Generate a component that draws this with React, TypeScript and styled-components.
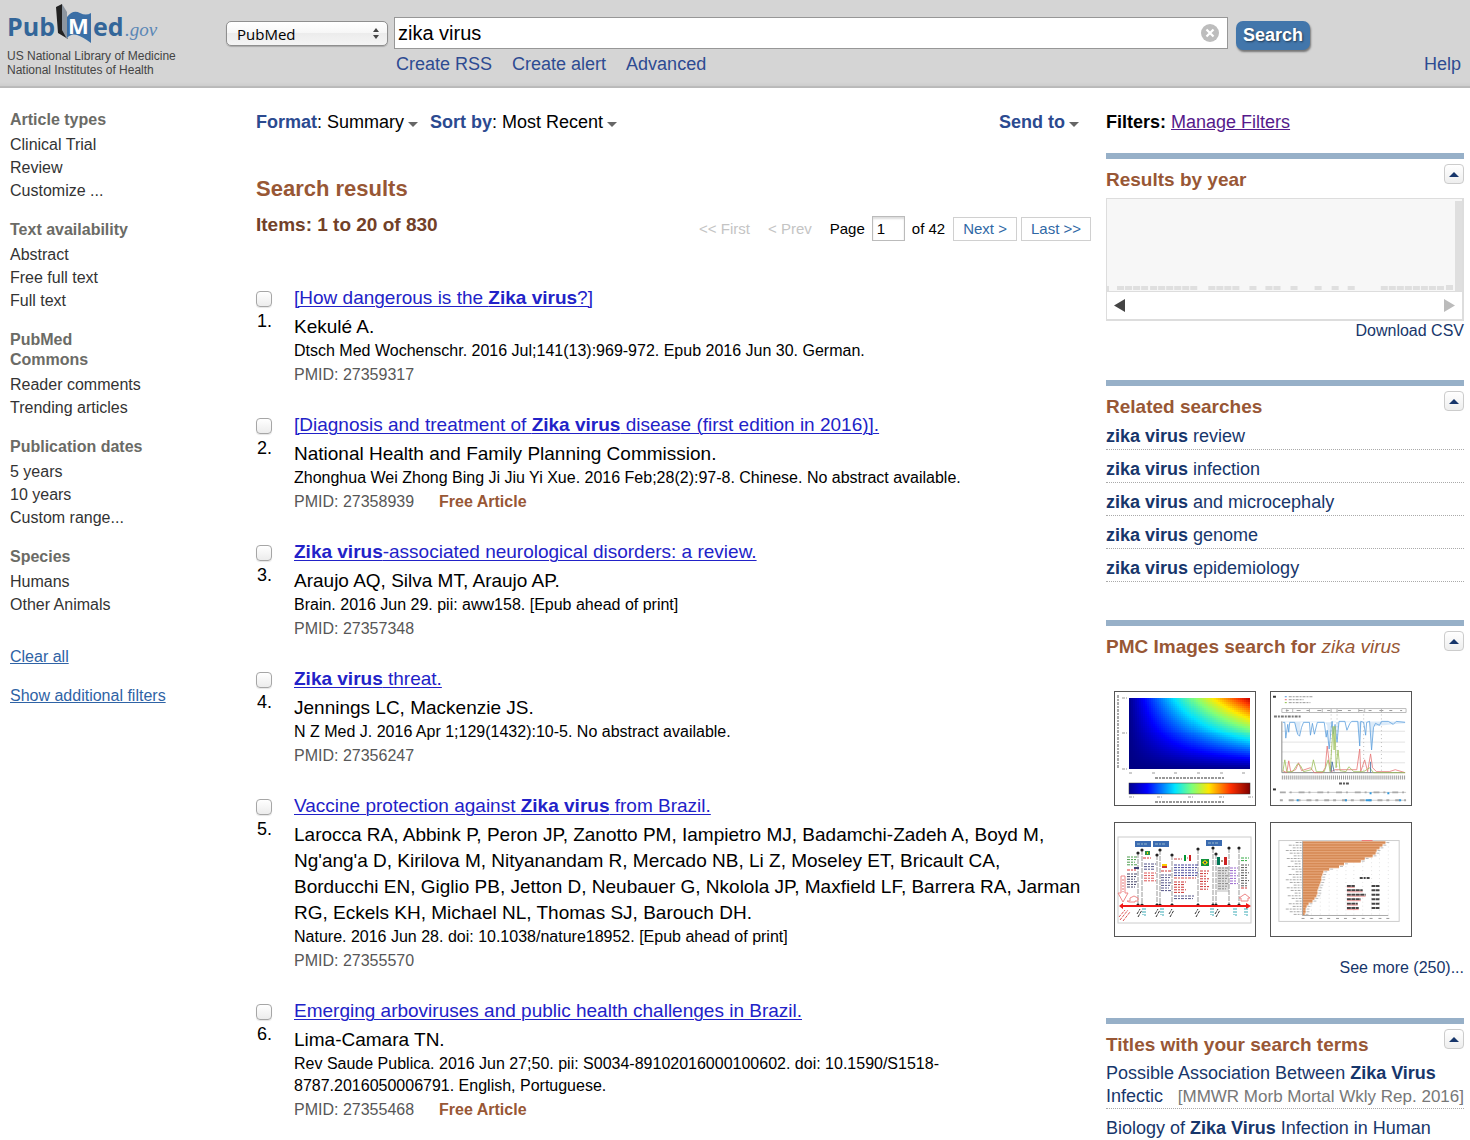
import React from 'react';
import styled, { createGlobalStyle } from 'styled-components';

const GlobalStyle = createGlobalStyle`
  *, *::before, *::after { box-sizing: border-box; }
  body {
    margin: 0;
    background: #fff;
    color: #000;
    font-family: Arial, "Liberation Sans", sans-serif;
    font-size: 16px;
    line-height: 22px;
  }
  h1, h2, h3, p, ul, ol { margin: 0; padding: 0; font-weight: inherit; }
  ul, ol { list-style: none; }
  button, input, select { font-family: inherit; }
`;

/* ---------- header ---------- */

const Header = styled.header`
  display: grid;
  grid-template-columns: 226px minmax(0, 1fr);
  height: 88px;
  background: linear-gradient(#d5d5d5 82px, #cdcdcd 86px, #a9a9a9 87px, #c9c9c9 88px);
`;

const Brand = styled.div`
  padding: 4px 0 0 7px;
`;

const LogoLink = styled.a`
  display: block;
  height: 45px;
`;

const Tagline = styled.p`
  color: #444;
  font-size: 12px;
  line-height: 14px;
`;

const SearchArea = styled.div`
  padding: 17px 9px 0 0;
`;

const SearchForm = styled.form`
  display: grid;
  grid-template-columns: 162px minmax(0, 1fr) 76px 145px;
  align-items: start;
  column-gap: 6px;
`;

const SelectWrap = styled.div`
  position: relative;
  margin-top: 4px;
`;

const DatabaseSelect = styled.select`
  appearance: none;
  display: block;
  width: 100%;
  height: 25px;
  padding: 0 10px;
  border: 1px solid #8f8f8f;
  border-radius: 5px;
  background: linear-gradient(#fff, #f6f6f6 50%, #ececec 50%, #f4f4f4);
  box-shadow: 0 1px 1px rgba(0, 0, 0, 0.2);
  color: #000;
  font-family: "Open Sans", sans-serif;
  font-size: 15px;
`;

const SelectArrows = styled.svg`
  position: absolute;
  top: 7px;
  right: 9px;
  pointer-events: none;
`;

const QueryWrap = styled.div`
  position: relative;
`;

const QueryInput = styled.input`
  display: block;
  width: 100%;
  height: 32px;
  padding: 0 34px 0 3px;
  border: 1px solid #979797;
  border-radius: 0;
  background: #fff;
  font-size: 20px;
`;

const ClearButton = styled.button`
  position: absolute;
  top: 6px;
  right: 8px;
  padding: 0;
  border: 0;
  background: none;
  line-height: 0;
`;

const SearchButton = styled.button`
  height: 29px;
  margin: 4px 0 0 2px;
  padding: 0;
  border: 0;
  border-radius: 7px;
  background: #4276ab;
  box-shadow: 1px 2px 2px rgba(0, 0, 0, 0.45);
  color: #fff;
  font-size: 18px;
  font-weight: bold;
  text-shadow: 1px 1px 2px rgba(0, 0, 0, 0.5);
`;

const HeaderLinks = styled.nav`
  display: flex;
  gap: 20px;
  padding: 3px 0 0 170px;
`;

const HeaderLink = styled.a<{ $end?: boolean }>`
  margin-left: ${(p) => (p.$end ? 'auto' : '0')};
  color: #2d4b92;
  font-size: 18px;
  text-decoration: none;
`;

/* ---------- page columns ---------- */

const Columns = styled.div`
  display: grid;
  grid-template-columns: 231px minmax(0, 1fr) 358px;
  column-gap: 15px;
  padding: 0 6px 0 10px;
`;

const FilterColumn = styled.aside`
  padding-top: 22px;
`;

const FilterGroup = styled.section`
  width: 150px;
  margin-bottom: 18px;
`;

const FilterHeading = styled.h3`
  margin-bottom: 3px;
  color: #6b6b66;
  font-size: 16px;
  font-weight: bold;
  line-height: 20px;
`;

const FilterLink = styled.a`
  display: block;
  color: #333;
  line-height: 23px;
  text-decoration: none;
`;

const FilterAction = styled.a`
  display: table;
  margin: 30px 0 -13px;
  color: #2f63a5;
`;

const Main = styled.main`
  padding-top: 22px;
`;

const Toolbar = styled.div`
  display: flex;
  gap: 12px;
  padding-right: 12px;
`;

const MenuButton = styled.button<{ $end?: boolean }>`
  display: flex;
  align-items: center;
  margin-left: ${(p) => (p.$end ? 'auto' : '0')};
  padding: 0;
  border: 0;
  background: none;
  color: #000;
  font-size: 18px;
  line-height: 24px;
  white-space: pre;
`;

const MenuLabel = styled.b`
  color: #2b4a90;
`;

const Caret = styled.span`
  width: 0;
  margin: 4px 0 0 4px;
  border: 5px solid transparent;
  border-top-color: #666;
  border-bottom: 0;
`;

const ResultsTitle = styled.h1`
  margin-top: 41px;
  color: #985735;
  font-size: 22px;
  font-weight: bold;
  line-height: 28px;
`;

const CountRow = styled.div`
  display: flex;
  align-items: flex-start;
  justify-content: space-between;
  margin-top: 10px;
`;

const Count = styled.h2`
  color: #724128;
  font-size: 19px;
  font-weight: bold;
  line-height: 24px;
`;

const Pager = styled.form`
  display: flex;
  align-items: center;
  gap: 4px;
  margin-top: 3px;
  font-size: 15px;
`;

const PagerOff = styled.span`
  margin-right: 14px;
  color: #c4c4c4;
`;

const PageLabel = styled.label`
  display: flex;
  align-items: center;
  gap: 7px;
`;

const PageInput = styled.input`
  width: 33px;
  height: 25px;
  padding: 0 4px;
  border: 1px solid #bbb;
  box-shadow: inset 0 2px 2px #ddd;
  font-size: 15px;
`;

const PagerButton = styled.a`
  padding: 0 9px;
  border: 1px solid #d0d0d0;
  color: #2f68a5;
  text-decoration: none;
`;

const PageTotal = styled.span`
  margin: 0 4px 0 3px;
`;

const ResultList = styled.ol`
  margin-top: 44px;
`;

const ResultItem = styled.li`
  display: grid;
  grid-template-columns: 38px minmax(0, 1fr);
  margin-bottom: 26px;
  padding-right: 5px;
`;

const Marker = styled.label`
  display: flex;
  flex-direction: column;
  gap: 3px;
  padding-top: 6px;
  font-size: 18px;
`;

const ResultCheck = styled.input`
  appearance: none;
  width: 16px;
  height: 16px;
  margin: 0;
  border: 1px solid #a6a6a6;
  border-radius: 4px;
  background: linear-gradient(#fff, #ececec);
  box-shadow: 0 1px 1px rgba(0, 0, 0, 0.1);
  &:checked { background: #6d9edb; }
`;

const Ordinal = styled.span`
  padding-left: 1px;
`;

const ResultTitle = styled.p`
  margin-bottom: 3px;
  font-size: 19px;
  line-height: 26px;
`;

const TitleLink = styled.a`
  color: #2222c8;
  text-decoration-thickness: 1px;
  text-underline-offset: 2px;
`;

const Authors = styled.p`
  font-size: 19px;
  line-height: 26px;
`;

const Identifier = styled.p`
  display: flex;
  gap: 25px;
  margin-top: 2px;
  color: #575757;
`;

const FreeTag = styled.b`
  color: #985735;
`;

/* ---------- right column ---------- */

const SideColumn = styled.aside`
  padding-top: 22px;
`;

const FiltersLine = styled.p`
  margin-bottom: 19px;
  font-size: 18px;
  line-height: 24px;
`;

const ManageLink = styled.a`
  color: #551a8b;
`;

const Portlet = styled.section<{ $gap: number }>`
  margin-bottom: ${(p) => p.$gap}px;
  border-top: 6px solid #97b0c8;
`;

const PortletHead = styled.div`
  display: flex;
  align-items: flex-start;
  justify-content: space-between;
  padding-top: 5px;
`;

const PortletTitle = styled.h3`
  margin-top: 4px;
  color: #985735;
  font-size: 19px;
  font-weight: bold;
  line-height: 24px;
`;

const QueryEcho = styled.i`
  font-weight: normal;
`;

const CollapseButton = styled.button`
  display: grid;
  place-items: center;
  width: 20px;
  height: 20px;
  padding: 0;
  border: 1px solid #ccc;
  border-radius: 4px;
  background: linear-gradient(#fff, #eee);
`;

const ChartFrame = styled.div`
  margin-top: 6px;
  border: 1px solid #ddd;
  border-width: 1px 2px 2px 1px;
`;

const ChartSvg = styled.svg`
  display: block;
  width: 100%;
  height: 93px;
  border-bottom: 1px solid #ddd;
  background: #f7f7f7;
`;

const ChartNav = styled.div`
  display: flex;
  align-items: center;
  justify-content: space-between;
  height: 27px;
  padding: 0 7px;
`;

const NavButton = styled.button`
  padding: 0;
  border: 0;
  background: none;
  line-height: 0;
`;

const MoreLink = styled.a`
  display: table;
  margin-left: auto;
  color: #17366b;
  line-height: 20px;
  text-decoration: none;
`;

const RelatedItem = styled.li`
  height: 33px;
  padding-top: 7px;
  border-bottom: 1px dotted #aaa;
  line-height: 24px;
  &:first-child { height: 31px; padding-top: 5px; }
`;

const SideLink = styled.a`
  color: #17366b;
  font-size: 18px;
  text-decoration: none;
`;

const Gallery = styled.div`
  display: grid;
  grid-template-columns: 142px 142px;
  gap: 16px 14px;
  margin: 32px 0 21px 8px;
`;

const ThumbLink = styled.a`
  display: block;
  border: 1px solid #555;
  line-height: 0;
`;

const ThumbSvg = styled.svg`
  display: block;
  width: 100%;
  height: 113px;
`;

const TitleItem = styled.li`
  height: 55px;
  padding-top: 8px;
  border-bottom: 1px dotted #aaa;
  &:first-child { height: 52px; padding-top: 5px; }
`;

const TitleTail = styled.div`
  display: flex;
  align-items: baseline;
  justify-content: space-between;
  white-space: nowrap;
`;

const Journal = styled.span`
  color: #777;
  font-size: 17px;
`;

/* ---------- drawings ---------- */

const Logo = () => (
  <svg width="156" height="44" viewBox="0 0 156 44" role="img" aria-label="PubMed.gov">
    <text x="0" y="32" fill="#336699" fontFamily="'Open Sans', sans-serif" fontWeight="bold" fontSize="25">Pub</text>
    <path d="M49 3 L55 0 L55 25 L61 35 L51 29 Z" fill="#222" />
    <path d="M55 0 L60 8 L60 35 L55 26 Z" fill="#8d96a0" />
    <path d="M60 13 Q66 5 73 9 Q79 12 84 9 L84 39 Q76 33 70 31 Q64 29 60 34 Z" fill="#3b6fa6" />
    <text x="61" y="30" fill="#fff" fontFamily="'Open Sans', sans-serif" fontWeight="bold" fontSize="22">M</text>
    <text x="86" y="32" fill="#336699" fontFamily="'Open Sans', sans-serif" fontWeight="bold" fontSize="25">ed</text>
    <text x="118" y="32" fill="#5b87b5" fontFamily="'Liberation Serif', serif" fontStyle="italic" fontSize="19">.gov</text>
  </svg>
);

const yearBars = [
  10, 18, 26, 34, 43, 51, 59, 67, 75, 83, 101, 109, 117, 125, 142, 158, 166, 183, 207, 224, 240,
  273, 281, 289, 297, 305, 313, 321, 329,
];

const YearChart = () => (
  <ChartSvg viewBox="0 0 354 92" preserveAspectRatio="none" role="img" aria-label="Results by year">
    <g fill="#dfdfdf">
      <rect x="0" y="87" width="2" height="5" />
      {yearBars.map((x) => <rect key={x} x={x} y="87" width="7" height="4" />)}
      <rect x="338" y="86" width="7" height="5" />
      <rect x="347" y="2" width="7" height="90" />
    </g>
  </ChartSvg>
);

const jet: [string, string][] = [
  ['0', '#00008f'], ['0.15', '#0000ff'], ['0.38', '#00e5ff'], ['0.52', '#7dff7a'],
  ['0.66', '#ffe600'], ['0.84', '#ff3000'], ['1', '#800000'],
];

const ramp = (u: number) => {
  const stops = [[0, 0, 0, 130], [0.13, 0, 0, 255], [0.38, 0, 225, 255], [0.55, 130, 255, 120], [0.7, 255, 235, 0], [0.9, 255, 60, 0], [1, 200, 0, 0]];
  const i = Math.max(1, stops.findIndex((s) => s[0] >= u));
  const [a, b] = [stops[i - 1], stops[i]];
  const t = (u - a[0]) / (b[0] - a[0]);
  return `rgb(${[1, 2, 3].map((k) => Math.round(a[k] + (b[k] - a[k]) * t)).join(',')})`;
};

const heatCells = Array.from({ length: 60 * 36 }, (_, n) => ({ c: n % 60, r: Math.floor(n / 60) }));

/** Row of short dashes standing for print too small to read. */
const Print = ({ x, y, w, c = '#999', s = 1, d = '3 1 2 1' }: { x: number; y: number; w: number; c?: string; s?: number; d?: string }) => (
  <path d={`M${x} ${y}h${w}`} stroke={c} strokeWidth={s} strokeDasharray={d} />
);

const HeatThumb = () => (
  <ThumbSvg viewBox="0 0 140 113" aria-hidden="true">
    <defs>
      <linearGradient id="jet">{jet.map(([o, c]) => <stop key={o} offset={o} stopColor={c} />)}</linearGradient>
    </defs>
    <g shapeRendering="crispEdges">
      {heatCells.map(({ c, r }) => (
        <rect key={`${c}-${r}`} x={14 + c * 2.016} y={6 + r * 1.972} width="2.1" height="2.1" fill={ramp(((c + 1) / 60) * Math.pow(1 - r / 36, 1.1) * 0.99)} />
      ))}
    </g>
    <path d="M3 3v74" stroke="#aaa" strokeWidth="2" strokeDasharray="3 1 2 1" />
    {[6, 41, 77].map((y) => <Print key={y} x={7} y={y} w={5} />)}
    {[14, 37, 59, 82, 105, 127].map((x) => <Print key={x} x={x} y={81} w={3} />)}
    <Print x={40} y={86} w={70} s={2} />
    <rect x="14" y="91" width="121" height="11" fill="url(#jet)" stroke="#333" strokeWidth="0.5" />
    {[14, 42, 73, 104, 133].map((x) => <Print key={x} x={x} y={105} w={5} />)}
    <Print x={40} y={110} w={69} s={2} />
  </ThumbSvg>
);

const GenomeThumb = () => (
  <ThumbSvg viewBox="0 0 142 113" aria-hidden="true" fill="none">
    <Print x={2} y={4} w={3} c="#333" s={2} />
    <Print x={14} y={4} w={2} c="#4f93d8" /><Print x={18} y={4} w={24} />
    <Print x={14} y={7} w={2} c="#e66" /><Print x={18} y={7} w={15} />
    <Print x={14} y={10} w={2} c="#8b4" /><Print x={18} y={10} w={22} />
    <path d="M11 16H137V20H11ZM16 16v4M22 16v4M39 16v4M52 16v4M61 16v4M67 16v4M89 16v4M95 16v4M112 16v4" stroke="#bbb" />
    <Print x={15} y={18} w={118} d="3 8 4 6" />
    <Print x={3} y={24} w={28} c="#777" s={2} />
    <path d="M11 39H136M11 50H136M11 60H136M11 71H136" stroke="#e3e3e3" />
    <path d="M61 18V82M67 18V82M94 18V82M112 18V82" stroke="#bbb" strokeDasharray="1 3" />
    <path d="M11 29V81H136" stroke="#888" />
    <path d="M12 29H54L57 33 58 50 60 40 61 29H66L67 44 69 29H136V31L124 32 104 34 102 56 100 30H92L90 53 88 30H30L29 44 25 38 24 30H13Z" fill="#9cc6ee" fillOpacity="0.35" />
    <g strokeWidth="0.8">
      <path d="M12 30H14L15 46 17 32 18 40 19 30H24L27 42 29 44 31 35 33 30H39L40 43 42 31 44 42 47 30H54L56 45 57 38 59 57 61 36 62 29 63 42 65 32 67 50 69 29H75L77 38 80 31 82 29H88L90 54 91 29 94 30 96 43 97 30 100 29 102 58 104 35 106 31 110 33 112 29H119L124 32 127 29 136 30" stroke="#5b9edc" />
      <path d="M12 79L16 81 18 69 20 80 25 78 28 71 31 79 40 76 44 81H52L55 76 57 54 59 70 61 80 65 78H87L90 57 91 80 95 68 98 80 101 62 103 76 107 80 120 80 126 78 136 81" stroke="#e57373" />
      <path d="M12 80L14 68 16 80H22L27 72 30 74 33 80 41 78 43 68 46 80H54L58 68 60 80 63 34 64 58 65 34 66 76 68 58 70 79 76 80 79 75 84 80H94L100 76 104 81H136" stroke="#9bbf58" />
      <path d="M61 80L62 70 64 80M101 81V70" stroke="#36699c" />
    </g>
    <path d="M11 86H136" stroke="#999" strokeWidth="4" strokeDasharray="1 1" />
    <Print x={69} y={92} w={10} c="#555" s={2} />
    <Print x={2} y={98} w={3} c="#333" s={2} />
    <path d="M18 101H137M18 109H137" stroke="#ccc" />
    <Print x={9} y={101} w={128} c="#aaa" s={2} d="6 4 2 7" /><Print x={9} y={109} w={128} c="#aaa" s={2} d="3 6 5 4" />
    <path d="M100 102h2M118 102h2M26 109h2M75 109h2M96 109h6M130 109h2" stroke="#39d" strokeWidth="2" />
  </ThumbSvg>
);

const poles: [number, number][] = [[23, 30], [27, 27], [42, 32], [45, 27], [57, 32], [83, 26], [98, 25], [101, 31], [114, 25], [124, 25]];
const notes: [number, number, number, string, number][] = [
  [12, 34, 10, '#4b9b4b', 4], [28, 35, 8, '#d33', 1], [12, 47, 9, '#d33', 1], [12, 51, 10, '#446', 6], [29, 41, 12, '#558', 3],
  [29, 50, 12, '#d55', 4], [46, 48, 11, '#c33', 1], [46, 52, 10, '#558', 7], [59, 36, 8, '#c44', 1], [59, 42, 24, '#449', 5],
  [59, 55, 22, '#c44', 1], [59, 59, 12, '#c33', 5], [59, 73, 20, '#558', 2], [85, 48, 9, '#c33', 8], [103, 45, 10, '#888', 9],
  [115, 45, 8, '#96c', 7], [126, 35, 8, '#3a4', 2], [126, 42, 8, '#555', 9], [126, 65, 7, '#c33', 1],
];

const TimelineThumb = () => (
  <ThumbSvg viewBox="0 0 140 113" aria-hidden="true" fill="none">
    <rect x="3" y="14" width="133" height="86" stroke="#ccc" />
    {[[20, 18], [38, 18], [91, 17]].map(([x, y]) => (
      <g key={x}><rect x={x} y={y} width="16" height="6" fill="#3b6bb0" /><Print x={x + 2} y={y + 3} w={11} c="#9bc" /></g>
    ))}
    <rect x="102" y="44" width="12" height="25" fill="#ddd" />
    {poles.map(([x, y]) => (
      <g key={x}><path d={`M${x} ${y}V82`} stroke="#999" strokeDasharray="5 1" /><circle cx={x} cy={y} r="1.6" fill="#222" /><circle cx={x} cy="82" r="1.6" fill="#222" /></g>
    ))}
    {notes.map(([x, y, w, c, n]) => Array.from({ length: n }, (_, i) => <Print key={`${x}-${y}-${i}`} x={x} y={y + i * 2.6} w={w - (i % 3)} c={c} />))}
    <rect x="30" y="28" width="5" height="4" fill="#2b9348" /><path d="M32 30h1" stroke="#fd0" strokeWidth="2" />
    <path d="M19 45h5" stroke="#447" strokeWidth="2" /><path d="M47 42h5" stroke="#fc0" strokeWidth="2" /><path d="M47 44h5" stroke="#c33" strokeWidth="2" />
    <path d="M69 32h2v6h-2z" fill="#093" /><path d="M74 32h2v6h-2z" fill="#c22" /><path d="M72 35h1" stroke="#964" />
    <rect x="86" y="36" width="8" height="7" fill="#14923d" /><path d="M90 37l3 2.500-3 2.500-3-2.500z" fill="#fd0" /><circle cx="90" cy="39.500" r="1" fill="#137" />
    <path d="M102 34h3v8h-3z" fill="#075" /><path d="M109 34h3v8h-3z" fill="#c22" /><circle cx="107" cy="38" r="1" fill="#964" />
    <path d="M7 83H132" stroke="#f01818" strokeWidth="2" /><path d="M131 80l5 3-5 3zM4 83l4-3v6z" fill="#f01818" />
    <path d="M6 53h4v17h3l-5 9-5-9h3zM12 78h3v-3l4-2 4 2v3h-3v1h-6zM126 78v-3h-2l6-4 5 4h-2v3z" stroke="#e88" />
    <path d="M8 56v13" stroke="#d77" strokeDasharray="2 1" />
    {[22, 40, 54, 80, 100].map((x) => (
      <path key={x} d={`M${x} 91l3-5M${x + 1} 94l4-7`} stroke="#333" strokeDasharray="3 1" />
    ))}
    {[28, 46, 96, 119, 130].map((x) => <path key={x} d={`M${x} 85v7M${x + 2} 85v8`} stroke="#36a9b5" strokeDasharray="2 1" />)}
    <path d="M5 97l8-10M8 98l7-9M4 94l6-7" stroke="#d55" strokeDasharray="3 1" />
  </ThumbSvg>
);

const symptomBars = [83, 80, 77, 74, 73, 70, 62, 58, 41, 36, 26, 20, 19, 18, 18, 17, 16, 15, 14, 14, 13, 11, 9, 5, 3, 2, 2, 1];

const SymptomThumb = () => (
  <ThumbSvg viewBox="0 0 142 113" aria-hidden="true" fill="none">
    <rect x="8" y="17" width="122" height="82" stroke="#ccc" />
    {[41, 50, 59, 67, 76, 84, 93, 102, 110, 119].map((x) => <path key={x} d={`M${x} 19V93`} stroke="#e3e3e3" strokeDasharray="1 3" />)}
    <path d={`M32 18${symptomBars.map((w, i) => `H${33 + w}V${18 + (i + 1) * 2.7}`).join('')}H32Z`} fill="#e6a77b" />
    {symptomBars.map((w, i) => (
      <g key={i}>
        <rect x="32" y={18 + i * 2.7} width={w + 1} height="1.6" fill="#d68a55" />
        <Print x={31 - (6 + ((i * 7) % 11))} y={19 + i * 2.7} w={6 + ((i * 7) % 11)} c="#aaa" />
        <Print x={34 + w} y={19 + i * 2.7} w={4} c="#bbb" />
      </g>
    ))}
    <path d="M92 17h11" stroke="#e77" />
    <path d="M32 18V93H119" stroke="#aaa" />
    {[31, 40, 49, 57, 66, 74, 83, 92, 100, 109, 117].map((x) => <Print key={x} x={x} y={96} w={3} />)}
    <Print x={90} y={55} w={11} c="#444" s={2} />
    {[8, 16, 19, 14, 11, 12].map((w, i) => (
      <g key={i}>
        <Print x={77} y={63 + i * 4.5} w={w} c="#444" s={2} d="4 0.5" />
        <path d={`M77 ${64.5 + i * 4.5}h${w}`} stroke="#e77" strokeWidth="0.7" />
        <Print x={102} y={63 + i * 4.5} w={8} c="#444" s={2} d="4 0.5" />
      </g>
    ))}
  </ThumbSvg>
);

/* ---------- data ---------- */

const filterGroups = [
  { title: 'Article types', items: ['Clinical Trial', 'Review', 'Customize ...'] },
  { title: 'Text availability', items: ['Abstract', 'Free full text', 'Full text'] },
  { title: 'PubMed Commons', items: ['Reader comments', 'Trending articles'] },
  { title: 'Publication dates', items: ['5 years', '10 years', 'Custom range...'] },
  { title: 'Species', items: ['Humans', 'Other Animals'] },
];

const results = [
  { pre: '[How dangerous is the ', hit: 'Zika virus', post: '?]', authors: 'Kekulé A.', cite: 'Dtsch Med Wochenschr. 2016 Jul;141(13):969-972. Epub 2016 Jun 30. German.', pmid: '27359317' },
  { pre: '[Diagnosis and treatment of ', hit: 'Zika virus', post: ' disease (first edition in 2016)].', authors: 'National Health and Family Planning Commission.', cite: 'Zhonghua Wei Zhong Bing Ji Jiu Yi Xue. 2016 Feb;28(2):97-8. Chinese. No abstract available.', pmid: '27358939', free: true },
  { pre: '', hit: 'Zika virus', post: '-associated neurological disorders: a review.', authors: 'Araujo AQ, Silva MT, Araujo AP.', cite: 'Brain. 2016 Jun 29. pii: aww158. [Epub ahead of print]', pmid: '27357348' },
  { pre: '', hit: 'Zika virus', post: ' threat.', authors: 'Jennings LC, Mackenzie JS.', cite: 'N Z Med J. 2016 Apr 1;129(1432):10-5. No abstract available.', pmid: '27356247' },
  { pre: 'Vaccine protection against ', hit: 'Zika virus', post: ' from Brazil.', authors: "Larocca RA, Abbink P, Peron JP, Zanotto PM, Iampietro MJ, Badamchi-Zadeh A, Boyd M, Ng'ang'a D, Kirilova M, Nityanandam R, Mercado NB, Li Z, Moseley ET, Bricault CA, Borducchi EN, Giglio PB, Jetton D, Neubauer G, Nkolola JP, Maxfield LF, Barrera RA, Jarman RG, Eckels KH, Michael NL, Thomas SJ, Barouch DH.", cite: 'Nature. 2016 Jun 28. doi: 10.1038/nature18952. [Epub ahead of print]', pmid: '27355570' },
  { pre: 'Emerging arboviruses and public health challenges in Brazil.', hit: '', post: '', authors: 'Lima-Camara TN.', cite: 'Rev Saude Publica. 2016 Jun 27;50. pii: S0034-89102016000100602. doi: 10.1590/S1518-8787.2016050006791. English, Portuguese.', pmid: '27355468', free: true },
];

const related = ['review', 'infection', 'and microcephaly', 'genome', 'epidemiology'];

const Collapse = () => (
  <CollapseButton type="button" aria-label="Collapse">
    <svg width="10" height="5" viewBox="0 0 10 5"><path d="M0 5L5 0L10 5Z" fill="#17366b" /></svg>
  </CollapseButton>
);

export default function App() {
  return (
    <>
      <GlobalStyle />
      <Header>
        <Brand>
          <LogoLink href="#"><Logo /></LogoLink>
          <Tagline>US National Library of Medicine<br />National Institutes of Health</Tagline>
        </Brand>
        <SearchArea>
          <SearchForm onSubmit={(e) => e.preventDefault()}>
            <SelectWrap>
              <DatabaseSelect aria-label="Database"><option>PubMed</option></DatabaseSelect>
              <SelectArrows width="6" height="11" viewBox="0 0 6 11"><path d="M0 4L3 0L6 4ZM0 7L3 11L6 7Z" fill="#444" /></SelectArrows>
            </SelectWrap>
            <QueryWrap>
              <QueryInput aria-label="Search term" defaultValue="zika virus" />
              <ClearButton type="button" aria-label="Clear search">
                <svg width="20" height="20" viewBox="0 0 20 20"><circle cx="10" cy="10" r="9" fill="#bdbdbd" /><path d="M6.500 6.500l7 7M13.500 6.500l-7 7" stroke="#fff" strokeWidth="2.200" /></svg>
              </ClearButton>
            </QueryWrap>
            <SearchButton type="submit">Search</SearchButton>
          </SearchForm>
          <HeaderLinks>
            <HeaderLink href="#">Create RSS</HeaderLink>
            <HeaderLink href="#">Create alert</HeaderLink>
            <HeaderLink href="#">Advanced</HeaderLink>
            <HeaderLink href="#" $end>Help</HeaderLink>
          </HeaderLinks>
        </SearchArea>
      </Header>

      <Columns>
        <FilterColumn>
          {filterGroups.map((g) => (
            <FilterGroup key={g.title}>
              <FilterHeading>{g.title === 'PubMed Commons' ? <>PubMed<br />Commons</> : g.title}</FilterHeading>
              {g.items.map((i) => <FilterLink key={i} href="#">{i}</FilterLink>)}
            </FilterGroup>
          ))}
          <FilterAction href="#">Clear all</FilterAction>
          <FilterAction href="#">Show additional filters</FilterAction>
        </FilterColumn>

        <Main>
          <Toolbar>
            <MenuButton type="button"><MenuLabel>Format</MenuLabel>: Summary<Caret /></MenuButton>
            <MenuButton type="button"><MenuLabel>Sort by</MenuLabel>: Most Recent<Caret /></MenuButton>
            <MenuButton type="button" $end><MenuLabel>Send to</MenuLabel><Caret /></MenuButton>
          </Toolbar>
          <ResultsTitle>Search results</ResultsTitle>
          <CountRow>
            <Count>Items: 1 to 20 of 830</Count>
            <Pager onSubmit={(e) => e.preventDefault()}>
              <PagerOff>&lt;&lt; First</PagerOff>
              <PagerOff>&lt; Prev</PagerOff>
              <PageLabel>Page <PageInput defaultValue="1" /></PageLabel>
              <PageTotal>of 42</PageTotal>
              <PagerButton href="#">Next &gt;</PagerButton>
              <PagerButton href="#">Last &gt;&gt;</PagerButton>
            </Pager>
          </CountRow>
          <ResultList>
            {results.map((r, i) => (
              <ResultItem key={r.pmid}>
                <Marker><ResultCheck type="checkbox" /><Ordinal>{i + 1}.</Ordinal></Marker>
                <div>
                  <ResultTitle><TitleLink href="#">{r.pre}<b>{r.hit}</b>{r.post}</TitleLink></ResultTitle>
                  <Authors>{r.authors}</Authors>
                  <p>{r.cite}</p>
                  <Identifier><span>PMID: {r.pmid}</span>{r.free && <FreeTag>Free Article</FreeTag>}</Identifier>
                </div>
              </ResultItem>
            ))}
          </ResultList>
        </Main>

        <SideColumn>
          <FiltersLine><b>Filters:</b> <ManageLink href="#">Manage Filters</ManageLink></FiltersLine>

          <Portlet $gap={39}>
            <PortletHead><PortletTitle>Results by year</PortletTitle><Collapse /></PortletHead>
            <ChartFrame>
              <YearChart />
              <ChartNav>
                <NavButton type="button" aria-label="Earlier years"><svg width="11" height="13" viewBox="0 0 11 13"><path d="M11 0V13L0 6.500Z" fill="#444" /></svg></NavButton>
                <NavButton type="button" aria-label="Later years"><svg width="11" height="13" viewBox="0 0 11 13"><path d="M0 0V13L11 6.500Z" fill="#bbb" /></svg></NavButton>
              </ChartNav>
            </ChartFrame>
            <MoreLink href="#">Download CSV</MoreLink>
          </Portlet>

          <Portlet $gap={38}>
            <PortletHead><PortletTitle>Related searches</PortletTitle><Collapse /></PortletHead>
            <ul>
              {related.map((t) => <RelatedItem key={t}><SideLink href="#"><b>zika virus</b> {t}</SideLink></RelatedItem>)}
            </ul>
          </Portlet>

          <Portlet $gap={40}>
            <PortletHead><PortletTitle>PMC Images search for <QueryEcho>zika virus</QueryEcho></PortletTitle><Collapse /></PortletHead>
            <Gallery>
              <ThumbLink href="#" aria-label="Risk heat map"><HeatThumb /></ThumbLink>
              <ThumbLink href="#" aria-label="Genome plot"><GenomeThumb /></ThumbLink>
              <ThumbLink href="#" aria-label="Outbreak timeline"><TimelineThumb /></ThumbLink>
              <ThumbLink href="#" aria-label="Symptom chart"><SymptomThumb /></ThumbLink>
            </Gallery>
            <MoreLink href="#">See more (250)...</MoreLink>
          </Portlet>

          <Portlet $gap={0}>
            <PortletHead><PortletTitle>Titles with your search terms</PortletTitle><Collapse /></PortletHead>
            <ul>
              <TitleItem>
                <SideLink href="#">Possible Association Between <b>Zika Virus</b></SideLink>
                <TitleTail><SideLink href="#">Infectic</SideLink><Journal>[MMWR Morb Mortal Wkly Rep. 2016]</Journal></TitleTail>
              </TitleItem>
              <TitleItem><SideLink href="#">Biology of <b>Zika Virus</b> Infection in Human</SideLink></TitleItem>
            </ul>
          </Portlet>
        </SideColumn>
      </Columns>
    </>
  );
}
